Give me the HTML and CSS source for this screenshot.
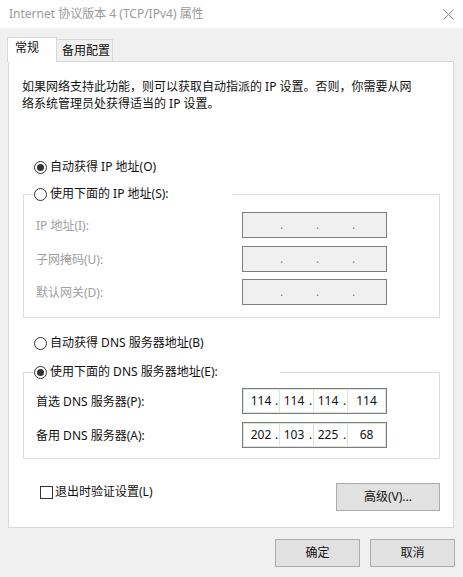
FILE: index.html
```html
<!DOCTYPE html>
<html lang="zh-CN">
<head>
    <meta charset="UTF-8">
    <meta name="viewport" content="width=device-width, initial-scale=1.0">
    <title>Internet 协议版本 4 (TCP/IPv4) 属性</title>
    <link rel="stylesheet" href="styles.css">
</head>
<body>
    <div class="titlebar">
        <span class="title">Internet 协议版本 4 (TCP/IPv4) 属性</span>
        <svg class="close" width="11" height="11" viewBox="0 0 11 11">
            <path d="M0.5 0.5 L10.5 10.5 M10.5 0.5 L0.5 10.5" stroke="#8a8a8a" stroke-width="1" fill="none"/>
        </svg>
    </div>

    <div class="tabs">
        <div class="tab active">常规</div>
        <div class="tab">备用配置</div>
    </div>

    <div class="panel">
        <p class="intro">如果网络支持此功能，则可以获取自动指派的 IP 设置。否则，你需要从网<br>络系统管理员处获得适当的 IP 设置。</p>

        <div class="radio-row first">
            <span class="radio checked"></span>
            <span>自动获得 IP 地址(O)</span>
        </div>

        <fieldset class="group ip-group">
            <legend class="legend-ip">
                <span class="radio"></span>
                <span>使用下面的 IP 地址(S):</span>
            </legend>
            <div class="field-row">
                <span class="label muted">IP 地址(I):</span>
                <div class="ip-field off">
                    <span class="seg"><span class="num"></span><span class="dot">.</span></span>
                    <span class="seg"><span class="num"></span><span class="dot">.</span></span>
                    <span class="seg"><span class="num"></span><span class="dot">.</span></span>
                    <span class="seg last"><span class="num"></span></span>
                </div>
            </div>
            <div class="field-row">
                <span class="label muted">子网掩码(U):</span>
                <div class="ip-field off">
                    <span class="seg"><span class="num"></span><span class="dot">.</span></span>
                    <span class="seg"><span class="num"></span><span class="dot">.</span></span>
                    <span class="seg"><span class="num"></span><span class="dot">.</span></span>
                    <span class="seg last"><span class="num"></span></span>
                </div>
            </div>
            <div class="field-row">
                <span class="label muted">默认网关(D):</span>
                <div class="ip-field off">
                    <span class="seg"><span class="num"></span><span class="dot">.</span></span>
                    <span class="seg"><span class="num"></span><span class="dot">.</span></span>
                    <span class="seg"><span class="num"></span><span class="dot">.</span></span>
                    <span class="seg last"><span class="num"></span></span>
                </div>
            </div>
        </fieldset>

        <div class="radio-row second">
            <span class="radio"></span>
            <span>自动获得 DNS 服务器地址(B)</span>
        </div>

        <fieldset class="group dns-group">
            <legend class="legend-dns">
                <span class="radio checked"></span>
                <span>使用下面的 DNS 服务器地址(E):</span>
            </legend>
            <div class="field-row">
                <span class="label">首选 DNS 服务器(P):</span>
                <div class="ip-field">
                    <span class="seg"><span class="num">114</span><span class="dot">.</span></span>
                    <span class="seg"><span class="num">114</span><span class="dot">.</span></span>
                    <span class="seg"><span class="num">114</span><span class="dot">.</span></span>
                    <span class="seg last"><span class="num">114</span></span>
                </div>
            </div>
            <div class="field-row">
                <span class="label">备用 DNS 服务器(A):</span>
                <div class="ip-field">
                    <span class="seg"><span class="num">202</span><span class="dot">.</span></span>
                    <span class="seg"><span class="num">103</span><span class="dot">.</span></span>
                    <span class="seg"><span class="num">225</span><span class="dot">.</span></span>
                    <span class="seg last"><span class="num">68</span></span>
                </div>
            </div>
        </fieldset>

        <div class="bottom-row">
            <div class="check-row">
                <span class="checkbox"></span>
                <span>退出时验证设置(L)</span>
            </div>
            <button class="btn advanced">高级(V)...</button>
        </div>
    </div>

    <div class="footer">
        <button class="btn">确定</button>
        <button class="btn">取消</button>
    </div>
</body>
</html>
```

FILE: styles.css
```css
* {
    margin: 0;
    padding: 0;
    box-sizing: border-box;
}

body {
    width: 463px;
    height: 577px;
    overflow: hidden;
    background: #f0f0f0;
    font-family: "Noto Sans", "Noto Sans CJK SC", sans-serif;
    font-size: 12px;
    line-height: 16px;
    color: #111;
}

/* Title bar */
.titlebar {
    height: 28px;
    background: #fff;
    display: flex;
    align-items: center;
    justify-content: space-between;
    padding: 0 9px;
}

.title {
    color: #9a9a9a;
}

.close {
    display: block;
}

/* Tabs */
.tabs {
    display: flex;
    align-items: flex-end;
    margin: 9px 0 0 7px;
}

.tab {
    height: 22px;
    padding: 3px 2px 0 5px;
    background: #f0f0f0;
    border-top: 1px solid #d9d9d9;
    border-right: 1px solid #d9d9d9;
}

.tab.active {
    position: relative;
    height: 25px;
    margin-bottom: -1px;
    padding: 2px 17px 0 7px;
    background: #fff;
    border-left: 1px solid #d9d9d9;
}

/* Main panel */
.panel {
    width: 446px;
    height: 467px;
    margin-left: 8px;
    padding: 16px 13px 0;
    background: #fff;
    border: 1px solid #d9d9d9;
}

.intro {
    line-height: 17px;
}

.radio-row,
.group legend {
    display: flex;
    align-items: center;
    height: 16px;
}

.radio-row {
    margin-left: 12px;
}

.radio-row.first {
    margin-top: 47px;
}

.radio-row.second {
    margin-top: 17px;
}

.radio {
    width: 13px;
    height: 13px;
    margin-right: 3px;
    border: 1px solid #333;
    border-radius: 50%;
    background: #fff;
    display: flex;
    align-items: center;
    justify-content: center;
}

.radio.checked::after {
    content: "";
    width: 7px;
    height: 7px;
    border-radius: 50%;
    background: #333;
}

/* Group boxes */
.group {
    width: 417px;
    margin-left: 1px;
    border: 1px solid #dcdcdc;
    display: flex;
    flex-direction: column;
}

.group legend {
    margin-left: 10px;
    padding: 0;
}

.ip-group {
    margin-top: 11px;
    padding: 10px 0 12px;
    gap: 7.5px;
}

.legend-ip {
    width: 198px;
}

.dns-group {
    margin-top: 13px;
    padding: 8px 0 10px;
    gap: 8px;
}

.legend-dns {
    width: 246px;
}

.field-row {
    display: flex;
    align-items: center;
    height: 26px;
    padding-left: 12px;
}

.label {
    width: 206px;
    padding-top: 2px;
}

.label.muted {
    color: #a0a0a0;
}

/* IP address input */
.ip-field {
    width: 145px;
    height: 26px;
    display: flex;
    gap: 1px;
    padding: 1px;
    border: 1px solid #7a7f7a;
    background: #dbe5db;
}

.seg {
    display: flex;
    width: 33px;
    background: #fff;
}

.seg:first-child {
    width: 35px;
    padding-left: 4px;
}

.seg.last {
    flex: 1;
}

.num {
    flex: 1;
    text-align: center;
    line-height: 22px;
}

.dot {
    width: 5px;
    text-align: center;
    line-height: 22px;
}

.ip-field.off {
    background: #f0f0f0;
}

.ip-field.off .seg {
    background: #f0f0f0;
    width: 35px;
}

.ip-field.off .seg:first-child {
    width: 40px;
}

.ip-field.off .seg.last {
    width: auto;
}

.ip-field.off .dot {
    color: #8a8a8a;
}

/* Bottom row */
.bottom-row {
    display: flex;
    justify-content: space-between;
    align-items: flex-start;
    margin-top: 24px;
    padding-left: 18px;
}

.check-row {
    display: flex;
    align-items: center;
    margin-top: 1px;
}

.checkbox {
    width: 13px;
    height: 13px;
    margin-right: 2px;
    border: 1px solid #333;
    background: #fff;
}

.btn {
    height: 28px;
    background: #e1e1e1;
    border: 1px solid #adadad;
    font: inherit;
    color: #111;
}

.advanced {
    width: 104px;
}

/* Dialog buttons */
.footer {
    display: flex;
    justify-content: flex-end;
    gap: 10px;
    margin-top: 11px;
    padding-right: 8px;
}

.footer .btn {
    width: 85px;
}
```
